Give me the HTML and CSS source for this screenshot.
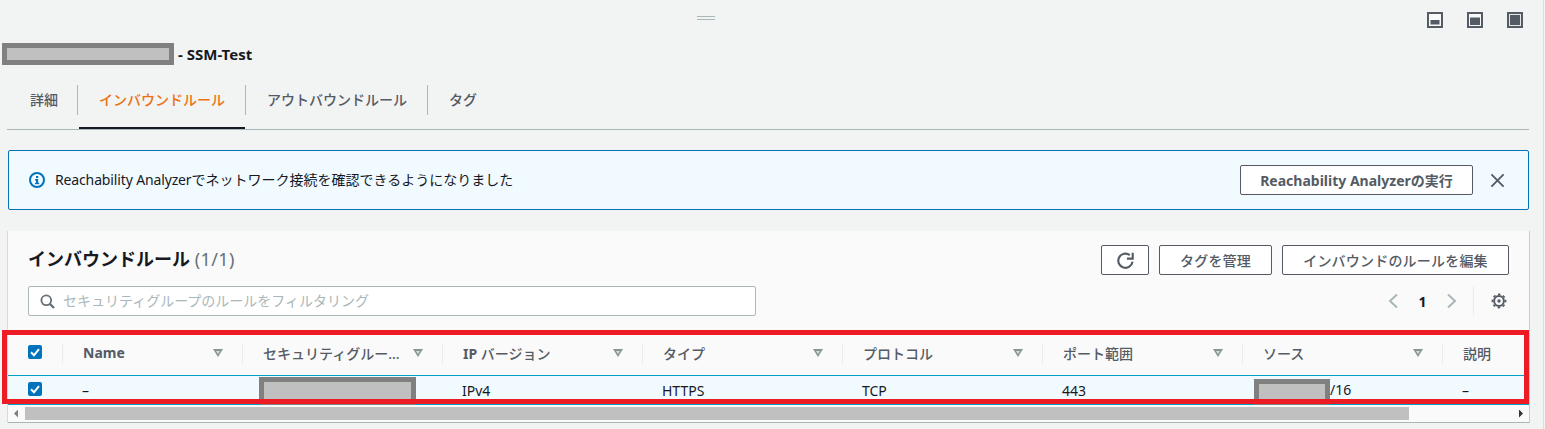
FILE: index.html
```html
<!DOCTYPE html>
<html lang="ja">
<head>
<meta charset="UTF-8">
<meta name="viewport" content="width=device-width, initial-scale=1.0">
<title>SSM-Test</title>
<link rel="stylesheet" href="styles.css">
</head>
<body>
  <div class="topbar">
    <div class="handle"></div>
    <div class="layout-icons">
      <svg class="layout-icon" viewBox="0 0 16 16"><rect x="1" y="1" width="14" height="14" fill="#f7f8f8" stroke="#545b64" stroke-width="2"/><rect x="3.5" y="8" width="9" height="4.5" fill="#545b64"/></svg>
      <svg class="layout-icon" viewBox="0 0 16 16"><rect x="1" y="1" width="14" height="14" fill="#f7f8f8" stroke="#545b64" stroke-width="2"/><rect x="3" y="5.5" width="10" height="7.5" fill="#545b64"/></svg>
      <svg class="layout-icon" viewBox="0 0 16 16"><rect x="1" y="1" width="14" height="14" fill="#e4e6e8" stroke="#545b64" stroke-width="2"/><rect x="3" y="3" width="10" height="10" fill="#545b64"/></svg>
    </div>
  </div>

  <div class="title-row">
    <span class="redact redact-title"></span>
    <span class="title-text">- SSM-Test</span>
  </div>

  <div class="tabs">
    <a class="tab tab-first">詳細</a>
    <a class="tab tab-active">インバウンドルール</a>
    <a class="tab tab-third">アウトバウンドルール</a>
    <a class="tab tab-last">タグ</a>
  </div>

  <div class="alert">
    <svg class="alert-icon" viewBox="0 0 16 16"><circle cx="8" cy="8" r="7" fill="none" stroke="#0073bb" stroke-width="2"/><rect x="7" y="7" width="2.2" height="5" fill="#0073bb"/><rect x="6" y="7" width="2" height="1.4" fill="#0073bb"/><rect x="6" y="10.8" width="4.2" height="1.4" fill="#0073bb"/><rect x="7" y="4" width="2.2" height="2" fill="#0073bb"/></svg>
    <span class="alert-text"><span class="alert-latin">Reachability Analyzer</span>でネットワーク接続を確認できるようになりました</span>
    <button class="btn btn-alert">Reachability Analyzerの実行</button>
    <svg class="alert-close" viewBox="0 0 16 16"><path d="M1.5 1.5l13 13M14.5 1.5l-13 13" stroke="#545b64" stroke-width="2" fill="none"/></svg>
  </div>

  <div class="card">
    <div class="card-head">
      <h2 class="card-title">インバウンドルール <span class="count">(1/1)</span></h2>
      <div class="actions">
        <button class="btn btn-icon"><svg class="refresh" viewBox="0 0 16 16"><path d="M14.6 9A6.7 6.7 0 1 1 12 2.9" fill="none" stroke="#545b64" stroke-width="2"/><path d="M9.4 6.2h5.4V.8" fill="none" stroke="#545b64" stroke-width="2"/></svg></button>
        <button class="btn btn-tags">タグを管理</button>
        <button class="btn btn-edit">インバウンドのルールを編集</button>
      </div>
    </div>

    <div class="filter-row">
      <div class="search">
        <svg class="search-icon" viewBox="0 0 16 16"><circle cx="6.7" cy="6.7" r="5.2" fill="none" stroke="#687078" stroke-width="2"/><path d="M10.5 10.5l4.5 4.5" stroke="#687078" stroke-width="2.4"/></svg>
        <span class="placeholder">セキュリティグループのルールをフィルタリング</span>
      </div>
      <div class="pager">
        <svg class="chev" viewBox="0 0 10 16"><path d="M9 1.5L2 8l7 6.5" fill="none" stroke="#aab7b8" stroke-width="2"/></svg>
        <span class="page-num">1</span>
        <svg class="chev" viewBox="0 0 10 16"><path d="M1 1.5L8 8l-7 6.5" fill="none" stroke="#aab7b8" stroke-width="2"/></svg>
        <span class="pager-sep"></span>
        <svg class="gear" viewBox="0 0 16 16"><circle cx="8" cy="8" r="4.9" fill="none" stroke="#545b64" stroke-width="2"/><circle cx="8" cy="8" r="6.6" fill="none" stroke="#545b64" stroke-width="1.6" stroke-dasharray="2.6 2.58" stroke-dashoffset="1.3"/><circle cx="8" cy="8" r="1.7" fill="#545b64"/></svg>
      </div>
    </div>

    <div class="table">
      <div class="tr th-row">
        <div class="cell cell-check"><span class="check"><svg viewBox="0 0 14 14"><path d="M3 7.2l3 3 5-6" fill="none" stroke="#fff" stroke-width="2"/></svg></span></div>
        <div class="cell th"><span class="th-label"><b>Name</b></span><i class="sort"></i></div>
        <div class="cell th"><span class="th-label">セキュリティグルー...</span><i class="sort"></i></div>
        <div class="cell th"><span class="th-label"><b>IP</b> バージョン</span><i class="sort"></i></div>
        <div class="cell th"><span class="th-label">タイプ</span><i class="sort"></i></div>
        <div class="cell th"><span class="th-label">プロトコル</span><i class="sort"></i></div>
        <div class="cell th"><span class="th-label">ポート範囲</span><i class="sort"></i></div>
        <div class="cell th"><span class="th-label">ソース</span><i class="sort"></i></div>
        <div class="cell th th-last"><span class="th-label">説明</span></div>
      </div>
      <div class="tr td-row">
        <div class="cell cell-check"><span class="check"><svg viewBox="0 0 14 14"><path d="M3 7.2l3 3 5-6" fill="none" stroke="#fff" stroke-width="2"/></svg></span></div>
        <div class="cell td">–</div>
        <div class="cell td td-sg"><span class="redact redact-sg"></span></div>
        <div class="cell td">IPv4</div>
        <div class="cell td">HTTPS</div>
        <div class="cell td">TCP</div>
        <div class="cell td">443</div>
        <div class="cell td td-src"><span class="redact redact-src"></span>/16</div>
        <div class="cell td">–</div>
      </div>
    </div>

    <div class="hscroll">
      <i class="arrow arrow-left"></i>
      <div class="thumb"></div>
      <i class="arrow arrow-right"></i>
    </div>

    <div class="highlight"></div>
  </div>
</body>
</html>
```

FILE: styles.css
```css
* {
  box-sizing: border-box;
}
html {
  height: 100%;
  background-color: #f2f3f3;
}
body {
  height: 100%;
  margin: 0 1px 0 0;
  background-color: #f2f3f3;
  border-right: 1px solid #dcdddd;
  color: #16191f;
  font-family: "Noto Sans", "Noto Sans CJK JP", sans-serif;
  font-size: 14px;
  overflow: hidden;
}

/* top strip */
.topbar {
  display: flex;
  justify-content: space-between;
  height: 43px;
  padding: 12px 20px 0 697px;
}
.handle {
  width: 18px;
  height: 4px;
  margin-top: 4px;
  border-top: 1px solid #aab7b8;
  border-bottom: 1px solid #aab7b8;
}
.layout-icons {
  display: flex;
  gap: 24px;
}
.layout-icon {
  width: 16px;
  height: 16px;
}

.title-row {
  display: flex;
  align-items: center;
  height: 22px;
  padding-left: 2px;
}
.redact {
  display: block;
  flex: none;
  background-color: #c0c0c0;
  border: 5px solid #808080;
}
.redact-title {
  width: 172px;
  height: 22px;
}
.title-text {
  margin-left: 4px;
  font-weight: 700;
  font-size: 15px;
}

/* tabs */
.tabs {
  display: flex;
  height: 45px;
  margin: 20px 14px 0 7px;
  border-bottom: 1px solid #aab7b8;
}
.tab {
  position: relative;
  height: 44px;
  padding: 5px 21px 0 20px;
  color: #545b64;
  font-weight: 500;
  line-height: 20px;
  margin-bottom: -1px;
  border-bottom: 2px solid transparent;
  white-space: nowrap;
}
.tab::after {
  content: "";
  position: absolute;
  top: 0;
  right: 0;
  width: 1px;
  height: 30px;
  background-color: #aab7b8;
}
.tab-first {
  width: 71px;
  padding: 5px 10px 0 23px;
}
.tab-active {
  width: 166px;
  margin-left: 1px;
  color: #ec7211;
  border-bottom-color: #16191f;
}
.tab-active::after {
  right: -1px;
}
.tab-third {
  width: 183px;
  padding-left: 22px;
}
.tab-last {
  padding-left: 21px;
}
.tab-last::after {
  display: none;
}

/* info banner */
.alert {
  display: flex;
  align-items: center;
  height: 60px;
  margin: 20px 14px 0 8px;
  padding: 0 23px 0 20px;
  background-color: #f1faff;
  border: 1px solid #0073bb;
  border-radius: 2px;
}
.alert-icon {
  width: 16px;
  height: 16px;
}
.alert-text {
  flex: 1;
  margin-left: 10px;
  padding-bottom: 2px;
  color: #16191f;
}
.alert-latin {
  letter-spacing: -.14px;
}
.btn {
  height: 30px;
  background-color: #fff;
  border: 1px solid #545b64;
  border-radius: 2px;
  color: #545b64;
  font-family: inherit;
  font-size: 14px;
  font-weight: 700;
  padding: 0;
}
.btn-alert {
  width: 233px;
}
.alert-close {
  width: 15px;
  height: 15px;
  margin-left: 17px;
}

/* rules card */
.card {
  position: relative;
  height: 192px;
  margin: 21px 14px 0 8px;
  background-color: #fafafa;
  border-bottom: 1px solid #aab7b8;
  box-shadow: -1px 0 0 #d5dbdb, 1px 0 0 #c5cccc;
}
.card-head {
  display: flex;
  justify-content: space-between;
  height: 55px;
  padding: 14px 20px 0 20px;
}
.card-title {
  margin: 0;
  font-size: 18px;
  line-height: 28px;
  font-weight: 700;
}
.count {
  color: #687078;
  font-weight: 400;
  letter-spacing: .4px;
}
.actions {
  display: flex;
  gap: 10px;
}
.btn-icon {
  display: flex;
  align-items: center;
  justify-content: center;
  width: 48px;
}
.refresh {
  width: 17px;
  height: 17px;
}
.btn-tags {
  width: 113px;
  font-weight: 500;
  letter-spacing: .2px;
}
.btn-edit {
  width: 227px;
  font-weight: 500;
  letter-spacing: .2px;
}
.filter-row {
  display: flex;
  justify-content: space-between;
  align-items: center;
  height: 30px;
  padding: 0 22px 0 20px;
}
.search {
  display: flex;
  align-items: center;
  width: 728px;
  height: 30px;
  padding-left: 11px;
  background-color: #fff;
  border: 1px solid #aab7b8;
  border-radius: 2px;
}
.search-icon {
  width: 15px;
  height: 15px;
}
.placeholder {
  margin-left: 8px;
  padding-bottom: 2px;
  color: #aab7b8;
}
.pager {
  display: flex;
  align-items: center;
}
.chev {
  width: 10px;
  height: 16px;
}
.page-num {
  width: 49px;
  text-align: center;
  font-weight: 700;
}
.pager-sep {
  width: 1px;
  height: 30px;
  margin: 0 17px 0 16px;
  background-color: #eaeded;
}
.gear {
  width: 16px;
  height: 16px;
}

/* table */
.table {
  margin-top: 14px;
  height: 75px;
  overflow: hidden;
}
.tr {
  display: grid;
  grid-template-columns: 55px 180px repeat(6, 200px) 1fr;
}
.th-row {
  height: 45px;
  padding-top: 5px;
}
.td-row {
  height: 30px;
  grid-template-rows: 28px;
  background-color: #f1faff;
  border-top: 1px solid #00a1c9;
  border-bottom: 1px solid #00a1c9;
}
.cell {
  display: flex;
  align-items: center;
  min-width: 0;
}
.cell-check {
  padding-left: 20px;
}
.th-row .cell {
  position: relative;
  height: 35px;
  padding: 0 20px;
  justify-content: space-between;
  font-weight: 500;
  color: #545b64;
}
.th-row .cell-check {
  justify-content: flex-start;
}
.th-row .cell-check::after, .th:not(.th-last)::after {
  content: "";
  position: absolute;
  top: 8px;
  right: 0;
  width: 1px;
  height: 21px;
  background-color: #eaeded;
}
.th-label {
  white-space: nowrap;
}
.sort {
  position: relative;
  display: block;
  flex: none;
  width: 10px;
  height: 8px;
  margin-top: 1px;
  background-color: #879596;
  clip-path: polygon(0 0, 100% 0, 50% 100%);
}
.sort::before {
  content: "";
  position: absolute;
  left: 3px;
  top: 2px;
  width: 4px;
  height: 3px;
  background-color: #d5dbdb;
  clip-path: polygon(0 0, 100% 0, 50% 100%);
}
.check {
  display: flex;
  width: 14px;
  height: 14px;
  background-color: #0073bb;
  border-radius: 2px;
}
.th-row .check {
  margin-bottom: 1px;
}
.td-row .check {
  margin-bottom: 2px;
}
.td {
  padding: 0 0 0 19px;
  color: #16191f;
}
.td-sg {
  padding: 0 0 0 16px;
  align-items: flex-start;
}
.td-src {
  padding: 0 0 0 11px;
  align-items: flex-start;
  line-height: 28px;
}
.redact-sg {
  width: 157px;
  height: 29px;
  margin-top: 1px;
}
.redact-src {
  width: 76px;
  height: 29px;
  margin-top: 3px;
}

/* horizontal scrollbar */
.hscroll {
  display: flex;
  align-items: center;
  height: 17px;
  padding: 0 5px 0 6px;
}
.thumb {
  width: 1384px;
  height: 13px;
  margin-left: 7px;
  background-color: #c0c0c0;
}
.arrow {
  display: block;
  width: 4px;
  height: 8px;
  background-color: #808080;
}
.arrow-left {
  clip-path: polygon(100% 0, 0 50%, 100% 100%);
}
.arrow-right {
  margin-left: auto;
  margin-right: 1px;
  background-color: #333;
  clip-path: polygon(0 0, 100% 50%, 0 100%);
}

/* red annotation over the table */
.highlight {
  position: absolute;
  left: -6px;
  top: 99px;
  width: 1527px;
  height: 74px;
  border: 5px solid #ed1c24;
}
```
